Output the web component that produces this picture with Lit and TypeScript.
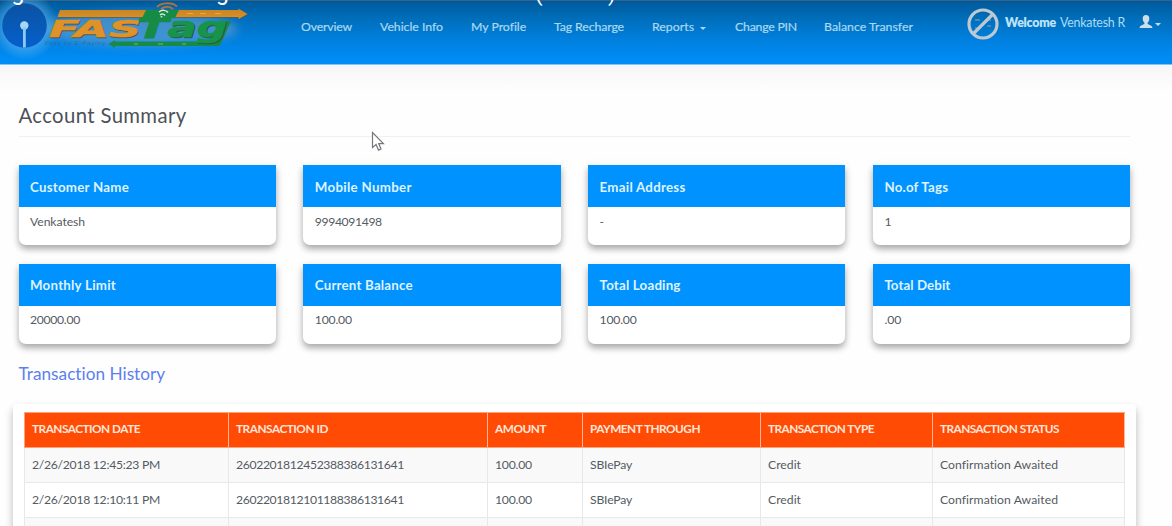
import { LitElement, html, svg, css } from "lit";
import { customElement, property } from "lit/decorators.js";

// A single line of text whose tracking is adjusted to span a given width.
@customElement("fit-text")
class FitText extends LitElement {
  @property() text = "";
  @property({ type: Number }) w = 0;
  static styles = css`
    :host { display: inline-block; white-space: pre; }
    span { display: inline-block; }
  `;
  render() { return html`<span>${this.text}</span>`; }
  updated() {
    const el = this.renderRoot.querySelector("span") as HTMLElement;
    el.style.letterSpacing = "0px";
    if (!this.w || this.text.length < 2) return;
    const natural = el.getBoundingClientRect().width;
    el.style.letterSpacing = `${(this.w - natural) / this.text.length}px`;
  }
}

const t = (text: string, w = 0) => html`<fit-text .text=${text} .w=${w}></fit-text>`;

const NAV: [string, number, boolean?][] = [
  ["Overview", 51], ["Vehicle Info", 63], ["My Profile", 55], ["Tag Recharge", 70],
  ["Reports", 42, true], ["Change PIN", 62], ["Balance Transfer", 89],
];
const CARDS: [string, number, string, number][] = [
  ["Customer Name", 99, "Venkatesh", 55], ["Mobile Number", 97, "9994091498", 67],
  ["Email Address", 86, "-", 0], ["No.of Tags", 64, "1", 0],
  ["Monthly Limit", 86, "20000.00", 50], ["Current Balance", 98, "100.00", 37],
  ["Total Loading", 81, "100.00", 37], ["Total Debit", 66, ".00", 17],
];
const HEADS: [string, number][] = [
  ["TRANSACTION DATE", 108], ["TRANSACTION ID", 92], ["AMOUNT", 51],
  ["PAYMENT THROUGH", 110], ["TRANSACTION TYPE", 106], ["TRANSACTION STATUS", 119],
];
const ROWS: [string, number][][] = [
  [["2/26/2018 12:45:23 PM", 128], ["2602201812452388386131641", 168], ["100.00", 37], ["SBIePay", 42], ["Credit", 33], ["Confirmation Awaited", 118]],
  [["2/26/2018 12:10:11 PM", 128], ["2602201812101188386131641", 168], ["100.00", 37], ["SBIePay", 42], ["Credit", 33], ["Confirmation Awaited", 118]],
];

const logo = svg`
  <defs>
    <radialGradient id="glow"><stop offset=".6" stop-color="#5fb2ee" stop-opacity=".6"/><stop offset="1" stop-color="#5fb2ee" stop-opacity="0"/></radialGradient>
    <linearGradient id="or" x1="0" x2="0" y1="0" y2="1"><stop offset="0" stop-color="#c48229"/><stop offset="1" stop-color="#de9220"/></linearGradient>
    <linearGradient id="disc" x1="0" x2="0" y1="0" y2="1"><stop offset="0" stop-color="#0b52a2"/><stop offset="1" stop-color="#0560cc"/></linearGradient>
    <filter id="soft" x="-20%" y="-40%" width="140%" height="180%"><feGaussianBlur stdDeviation="5"/></filter>
  </defs>
  <ellipse cx="140" cy="29" rx="98" ry="17" fill="#6aa3d0" opacity=".6" filter="url(#soft)"/>
  <circle cx="25" cy="26" r="34" fill="url(#glow)"/>
  <circle cx="24.5" cy="25.500" r="22.300" fill="url(#disc)"/>
  <circle cx="24.300" cy="25.500" r="4.200" fill="#a9d6f3"/>
  <path d="M23 27h2.800v20.500H23z" fill="#8ccaf4"/>
  <path d="M60.500 11H239V9l9.500 5.500-9.500 5v-1.500H58z" fill="#5f5b45" opacity=".7"/>
  <path d="M60 10H238.500V8.500l9 5.500-9 5v-2H57.500z" fill="url(#or)"/>
  <path d="M146 10h33l-4 8h-33z" fill="#168b45"/>
  <path d="M187 13.500h6M200 13.500h6M215 13.500h6" stroke="#e7ad35" stroke-width="1"/>
  <path d="M157 7c4-4.500 15-5 20-.5M161 9c4-3 9-3 12 0" fill="none" stroke="#a8743f" stroke-width="2"/>
  <path d="M159 12c3-2.500 7-2 9 .5M160 15c2-1.500 4-1 5 .5" fill="none" stroke="#d9ecd9" stroke-width="1.500"/>
  <circle cx="161.500" cy="17" r="1" fill="#d9ecd9"/>
  <path d="M231 21l-9.500 21.500q-1.500 3.500-5 3.500H115v2l-6.500-4 6.500-4v1.500h98q3 0 4.500-4L225 21z" fill="#168b45"/>
  <path d="M134 44h4M158 44h5M182 44h4" stroke="#80ba43" stroke-width="1.200"/>
  <g font-family="DejaVu Sans" font-weight="700" font-style="italic" stroke-width=".6">
    <text x="50" y="38" font-size="23.500" textLength="92" lengthAdjust="spacingAndGlyphs" fill="#55554c" stroke="#55554c">FAS</text>
    <text x="49" y="37" font-size="23.500" textLength="92" lengthAdjust="spacingAndGlyphs" fill="#de9228" stroke="#de9228">FAS</text>
    <text x="137" y="37.500" font-size="27" textLength="31" lengthAdjust="spacingAndGlyphs" fill="#168b45" stroke="#168b45" stroke-width="1">T</text>
    <text x="168.500" y="37.700" font-size="28.500" textLength="60" lengthAdjust="spacingAndGlyphs" fill="#305848" stroke="#305848">ag</text>
    <text x="167.500" y="36.800" font-size="28.500" textLength="60" lengthAdjust="spacingAndGlyphs" fill="#16944a" stroke="#16944a">ag</text>
  </g>
  <text x="45" y="45" font-family="Liberation Sans" font-size="6" font-style="italic" textLength="60" fill="#2c6fa8">Pass by E-Paying</text>`;

@customElement("app-root")
class AppRoot extends LitElement {
  static styles = css`
    :host { display: block; position: relative; width: 1172px; height: 526px; overflow: hidden; background: #fefefe; font-family: Lato, "Open Sans", sans-serif; color: #555b62; }
    * { box-sizing: border-box; }
    .bar { display: flex; align-items: flex-start; height: 65px; border-top: 1px solid #35638a; border-bottom: 1.500px solid #7cc6fa; background: linear-gradient(#00599a, #006eba 28%, #007fdd 60%, #008cf5 92%); }
    .logo { display: block; width: 301px; height: 62px; margin-top: -1px; flex: none; }
    .nav { display: grid; grid-template-columns: 79px 91px 83px 98px 83px 89px 143px; padding-top: 18px; font-size: 12.300px; line-height: 16px; color: #acd8ef; -webkit-text-stroke: .2px #acd8ef; }
    .item { display: flex; align-items: center; }
    .caret { width: 0; height: 0; border: 3.500px solid transparent; border-bottom: 0; border-top-color: currentColor; margin-left: 6px; margin-top: 3px; }
    .avatar { width: 32px; height: 32px; margin-top: 7px; flex: none; }
    .hello { display: flex; gap: 4px; margin: 14px 0 0 6px; font-size: 12.400px; line-height: 16px; color: #acdcf6; }
    .hello b { color: #bfe3f6; font-weight: 800; }
    .user { display: flex; color: #cfdde8; margin: 13px 0 0 14px; }
    .user .caret { margin: 9px 0 0 2px; }
    .fade { height: 27px; background: linear-gradient(#f6f5f8, #fefefe); }
    .main { padding: 0 42px 0 18.500px; }
    h1 { margin: 0; height: 45px; padding-top: 10px; font-size: 20.300px; line-height: 26px; font-weight: 400; color: #4d5157; border-bottom: 1px solid #f0f0f0; }
    .cards { display: grid; grid-template-columns: repeat(4, 257.300px); column-gap: 27.500px; row-gap: 19px; margin-top: 28px; }
    .card { height: 80px; background: #fff; border-radius: 0 0 7px 7px; box-shadow: 0 4px 6px rgba(0,0,0,.3), 0 2px 12px rgba(0,0,0,.07); }
    .head { height: 42px; background: #0092ff; color: #dff3ff; padding: 13px 11.500px 0; font-size: 13.300px; line-height: 18px; font-weight: 700; }
    .val { padding: 7px 11.500px; font-size: 12.200px; line-height: 16px; }
    .card:nth-child(n + 5) .head { padding-top: 12px; }
    .card:nth-child(n + 5) .val { padding-top: 6px; }
    h2 { margin: 18px 0 0; font-size: 17.200px; line-height: 24px; font-weight: 400; color: #5c7ff0; }
    .panel { margin: 18px -6px 0 -5.500px; height: 140px; padding: 8px 11px 0 10.500px; background: #fff; border-radius: 4px 4px 0 0; box-shadow: 0 5px 8px rgba(0,0,0,.28); }
    .tr { display: grid; grid-template-columns: 204px 259px 95px 178px 172px 192px; height: 35px; width: 1101px; border-left: 1px solid #e8e8e8; border-bottom: 1px solid #e8e8e8; background: #fff; font-size: 12.200px; line-height: 16px; }
    .tr.odd { background: #f9f9fa; }
    .tr > div { border-right: 1px solid #e8e8e8; padding: 9px 7.500px 0; }
    .tr.th { background: #ff4b04; color: #ffe6d9; height: 36px; font-weight: 700; font-size: 11.800px; border-color: #ffa27b; border-top: 1px solid #ffa27b; }
    .tr.th > div { border-color: #ffb798; padding-top: 8px; }
    .cursor { position: absolute; left: 371px; top: 131px; width: 15px; height: 21px; }
    .caption { position: absolute; left: 0; top: 0; width: 700px; height: 6px; overflow: hidden; }
    .caption span { position: absolute; top: -19px; font: 22px/26px Roboto, sans-serif; color: #fff; }
    .caption .c1, .caption .c2 { top: -20px; font-size: 23px; }
    .c1 { left: 11.500px; } .c2 { left: 216px; } .c3 { left: 535px; } .c4 { left: 608px; }
  `;
  render() {
    return html`
      <header class="bar">
        <svg class="logo" viewBox="0 0 301 62">${logo}</svg>
        <nav class="nav">${NAV.map(([s, w, c]) => html`<div class="item">${t(s, w)}${c ? html`<i class="caret"></i>` : ""}</div>`)}</nav>
        <svg class="avatar" viewBox="0 0 32 32" fill="none">
          <circle cx="16" cy="16" r="14" stroke="#bcc9d3" stroke-width="3.200"/>
          <path d="M8 12h5M20 12h4M8 20h5M20 18h4" stroke="#4c88b8" stroke-width="2"/>
          <path d="M25.500 6.500L6.500 25.500" stroke="#bcc9d3" stroke-width="3.200"/>
        </svg>
        <div class="hello"><b>${t("Welcome", 51)}</b>${t("Venkatesh R", 65)}</div>
        <div class="user">
          <svg width="14" height="15" viewBox="0 0 14 15"><path fill="currentColor" d="M7 1C4.800 1 3.500 2.500 3.700 4.700c.1 1.700.7 3 1.700 4v1.200C4.300 10.800.8 11.200.5 13.800V14h13v-.2c-.3-2.600-3.800-3-4.900-3.900V8.700c1-1 1.600-2.300 1.700-4C10.500 2.500 9.200 1 7 1z"/></svg>
          <i class="caret"></i>
        </div>
      </header>
      <div class="fade"></div>
      <main class="main">
        <h1>${t("Account Summary", 168)}</h1>
        <section class="cards">${CARDS.map(([h, hw, v, vw]) => html`
          <div class="card"><div class="head">${t(h, hw)}</div><div class="val">${t(v, vw)}</div></div>`)}</section>
        <h2>${t("Transaction History", 147)}</h2>
        <section class="panel">
          <div class="tr th">${HEADS.map(([s, w]) => html`<div>${t(s, w)}</div>`)}</div>
          ${ROWS.map((r, i) => html`<div class="tr ${i % 2 ? "" : "odd"}">${r.map(([s, w]) => html`<div>${t(s, w)}</div>`)}</div>`)}
          <div class="tr odd">${HEADS.map(() => html`<div></div>`)}</div>
        </section>
      </main>
      <svg class="cursor" viewBox="0 0 15 21"><path d="M1.500 1.500v15l3.600-3 2.400 5.600 2.500-1.100-2.300-5.400h4.700z" fill="#fff" stroke="#74777b" stroke-width="1.200"/></svg>
      <div class="caption"><span class="c1">g</span><span class="c2">g</span><span class="c3">(</span><span class="c4">)</span></div>
    `;
  }
}
